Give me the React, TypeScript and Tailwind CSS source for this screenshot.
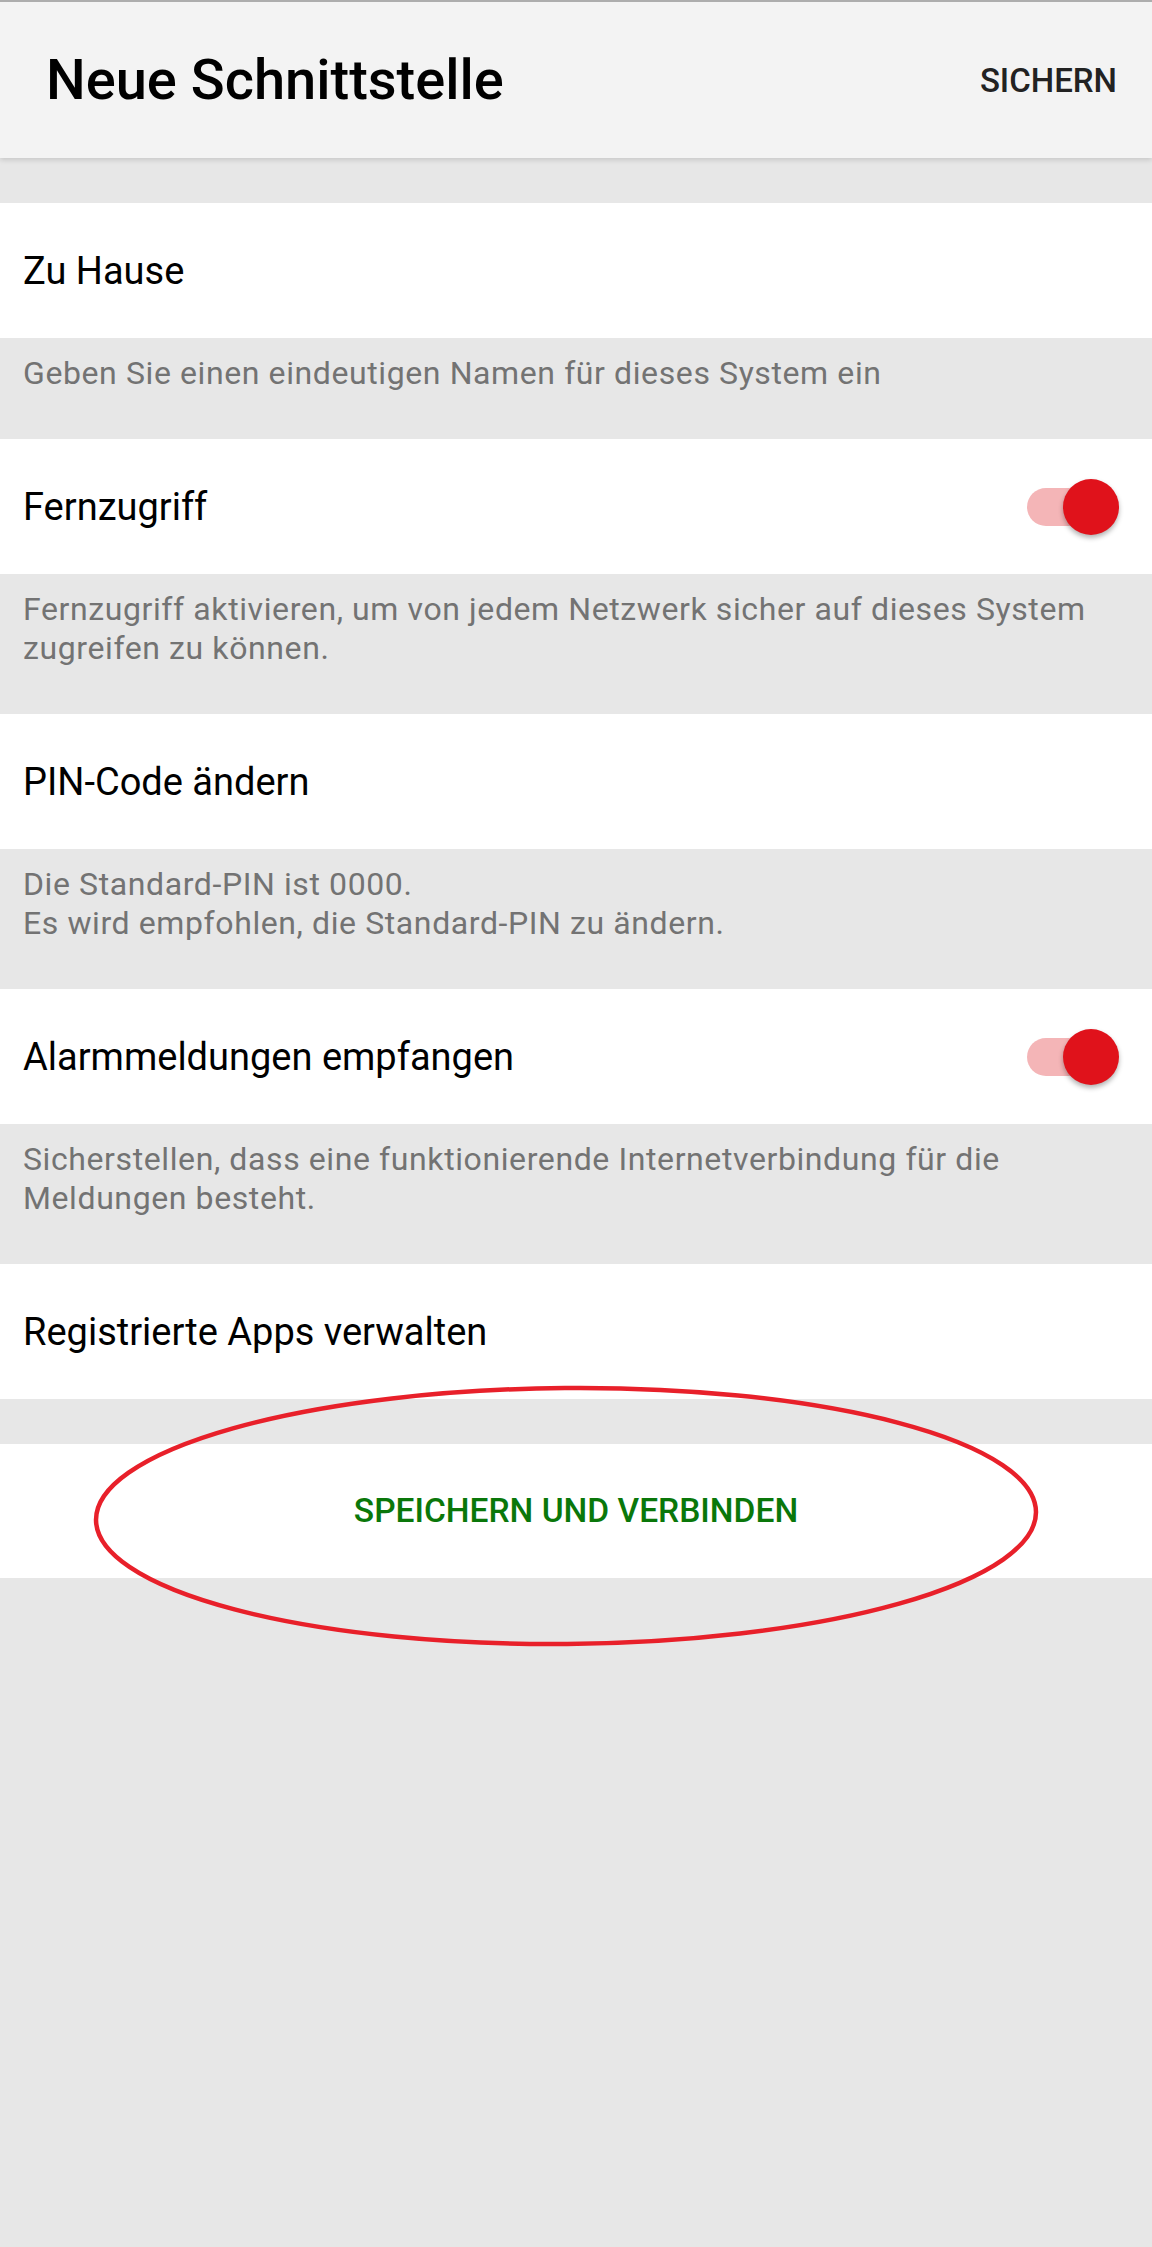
import React from 'react';

function Toggle() {
  return (
    <div className="relative w-[92px] h-[56px] shrink-0">
      <div className="absolute left-0 top-[9px] w-[88px] h-[38px] rounded-full bg-[#f4b5b7]" />
      <div className="absolute right-0 top-0 w-[56px] h-[56px] rounded-full bg-[#e0121b] shadow-[0_3px_5px_rgba(0,0,0,0.3)]" />
    </div>
  );
}

function Row({ label, toggle }: { label: string; toggle?: boolean }) {
  return (
    <div className="h-[135px] bg-white flex items-center justify-between pl-[23px] pr-[33px]">
      <span className="text-[38px] leading-none text-black">{label}</span>
      {toggle && <Toggle />}
    </div>
  );
}

function Help({ children }: { children: React.ReactNode }) {
  return (
    <div className="px-[23px] pt-[16px] pb-[46px] text-[32px] leading-[39px] tracking-[0.6px] text-[#737373]">
      {children}
    </div>
  );
}

export default function App() {
  return (
    <div className="relative min-h-[2247px] bg-[#e7e7e7] font-['Roboto',sans-serif]">
      <header className="relative z-10 h-[158px] border-t-2 border-[#adadad] bg-[#f3f3f3] shadow-[0_2px_5px_rgba(0,0,0,0.14)] flex items-center justify-between pl-[46px] pr-[35px]">
        <h1 className="text-[56px] leading-none font-medium text-black">Neue Schnittstelle</h1>
        <button className="text-[33px] leading-none font-medium text-[#222]">SICHERN</button>
      </header>

      <div className="h-[45px]" />
      <Row label="Zu Hause" />
      <Help>Geben Sie einen eindeutigen Namen für dieses System ein</Help>

      <Row label="Fernzugriff" toggle />
      <Help>Fernzugriff aktivieren, um von jedem Netzwerk sicher auf dieses System zugreifen zu können.</Help>

      <Row label="PIN-Code ändern" />
      <Help>
        Die Standard-PIN ist 0000.
        <br />
        Es wird empfohlen, die Standard-PIN zu ändern.
      </Help>

      <Row label="Alarmmeldungen empfangen" toggle />
      <Help>Sicherstellen, dass eine funktionierende Internetverbindung für die Meldungen besteht.</Help>

      <Row label="Registrierte Apps verwalten" />
      <div className="h-[45px]" />

      <div className="h-[134px] bg-white flex items-center justify-center">
        <button className="text-[33.5px] leading-none font-medium text-[#0a770a]">SPEICHERN UND VERBINDEN</button>
      </div>

      {/* red hand-drawn marker around the button */}
      <svg className="absolute left-[90px] top-[1383px] pointer-events-none" width="952" height="266" viewBox="0 0 952 266">
        <ellipse cx="476" cy="133" rx="470" ry="128" fill="none" stroke="#e8202a" strokeWidth="4.5" transform="rotate(-0.5 476 133)" />
      </svg>
    </div>
  );
}
